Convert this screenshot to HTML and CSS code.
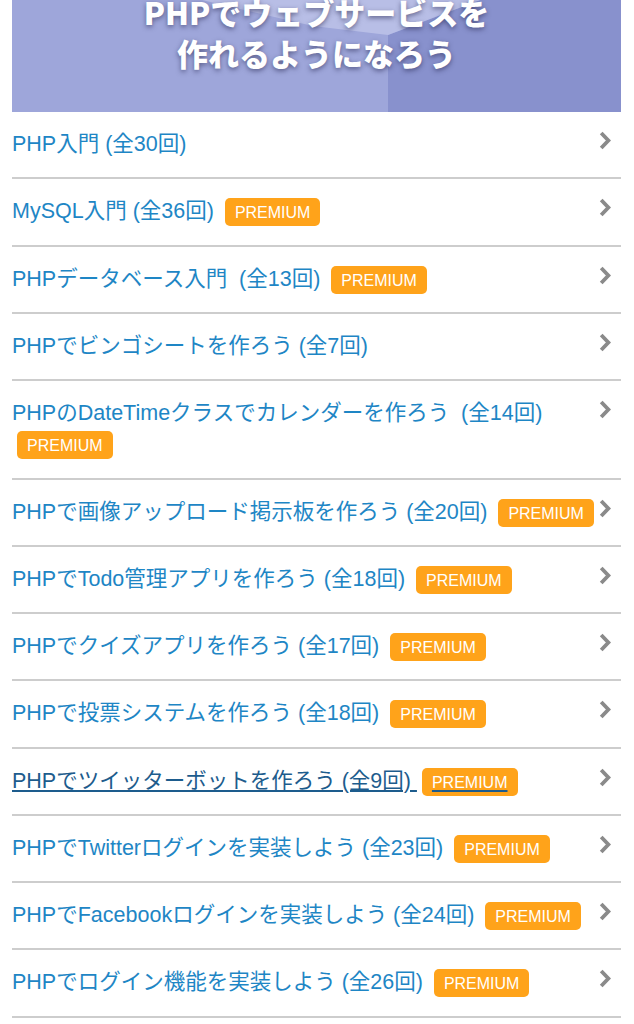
FILE: index.html
```html
<!DOCTYPE html>
<html lang="ja">
<head>
  <meta charset="UTF-8" />
  <title>PHPでウェブサービスを作れるようになろう</title>
  <link rel="stylesheet" href="styles.css">
</head>
<body>
  <div class="page">
    <div class="banner">
      <svg class="banner-bg" viewBox="0 0 609 112" preserveAspectRatio="none">
        <rect width="609" height="112" fill="#9ea6da"/>
        <polygon points="376,35 468,0 609,0 609,112 376,112" fill="#8891cd"/>
        <polygon points="190,0 301,26 376,35 468,0" fill="#b8bee6"/>
      </svg>
      <div class="banner-title">
        <div>PHPでウェブサービスを</div>
        <div>作れるようになろう</div>
      </div>
    </div>

    <ul class="lessons">
      <li><a href="#">PHP入門 (全30回)</a><span class="arrow"></span></li>
      <li><a href="#">MySQL入門 (全36回) <span class="premium">PREMIUM</span></a><span class="arrow"></span></li>
      <li><a href="#">PHPデータベース入門&nbsp; (全13回) <span class="premium">PREMIUM</span></a><span class="arrow"></span></li>
      <li><a href="#">PHPでビンゴシートを作ろう (全7回)</a><span class="arrow"></span></li>
      <li><a href="#">PHPのDateTimeクラスでカレンダーを作ろう&nbsp; (全14回) <span class="premium">PREMIUM</span></a><span class="arrow"></span></li>
      <li><a href="#">PHPで画像アップロード掲示板を作ろう (全20回) <span class="premium">PREMIUM</span></a><span class="arrow"></span></li>
      <li><a href="#">PHPでTodo管理アプリを作ろう (全18回) <span class="premium">PREMIUM</span></a><span class="arrow"></span></li>
      <li><a href="#">PHPでクイズアプリを作ろう (全17回) <span class="premium">PREMIUM</span></a><span class="arrow"></span></li>
      <li><a href="#">PHPで投票システムを作ろう (全18回) <span class="premium">PREMIUM</span></a><span class="arrow"></span></li>
      <li><a href="#" class="active">PHPでツイッターボットを作ろう (全9回) <span class="premium">PREMIUM</span></a><span class="arrow"></span></li>
      <li><a href="#">PHPでTwitterログインを実装しよう (全23回) <span class="premium">PREMIUM</span></a><span class="arrow"></span></li>
      <li><a href="#">PHPでFacebookログインを実装しよう (全24回) <span class="premium">PREMIUM</span></a><span class="arrow"></span></li>
      <li><a href="#">PHPでログイン機能を実装しよう (全26回) <span class="premium">PREMIUM</span></a><span class="arrow"></span></li>
    </ul>
  </div>
</body>
</html>
```

FILE: styles.css
```css
body {
  margin: 0;
  font-family: "Liberation Sans", "Noto Sans CJK JP", sans-serif;
  background: #fff;
  color: #333;
}

.page {
  padding: 0 13px 0 12px;
}

/* header image */
.banner {
  position: relative;
  height: 112px;
  overflow: hidden;
}

.banner-bg {
  position: absolute;
  top: 0;
  left: 0;
  width: 100%;
  height: 100%;
}

.banner-title {
  position: relative;
  margin-top: -9px;
  text-align: center;
  font-family: "Noto Sans CJK JP", sans-serif;
  font-weight: 900;
  font-size: 31px;
  line-height: 41px;
  color: #fff;
  text-shadow: 0 2px 5px rgba(30, 30, 70, 0.55);
}

/* lesson list */
.lessons {
  list-style: none;
  margin: 0;
  padding: 0;
}

.lessons li {
  position: relative;
  border-bottom: 2px solid #cdcdcd;
}

.lessons a {
  display: block;
  padding: 17px 20px 17px 0;
  font-size: 21.5px;
  line-height: 31.25px;
  color: #1e86c5;
  text-decoration: none;
}

.lessons a.active {
  color: #1d5c8d;
  text-decoration: underline;
  text-decoration-thickness: 1.5px;
  text-underline-offset: 2px;
}

.premium {
  margin-left: 5px;
  padding: 6px 10px 5px;
  border-radius: 5px;
  background: #ffa31a;
  color: #fff;
  font-size: 16px;
  line-height: 16px;
}

.arrow {
  position: absolute;
  top: 19px;
  right: 10px;
  width: 12px;
  height: 19px;
  background: url("data:image/svg+xml,%3Csvg xmlns='http://www.w3.org/2000/svg' viewBox='0 0 12 19'%3E%3Cpolyline points='2.2,2 9.4,9.5 2.2,17' fill='none' stroke='%238a8a8a' stroke-width='3.8'/%3E%3C/svg%3E") no-repeat;
}
```
